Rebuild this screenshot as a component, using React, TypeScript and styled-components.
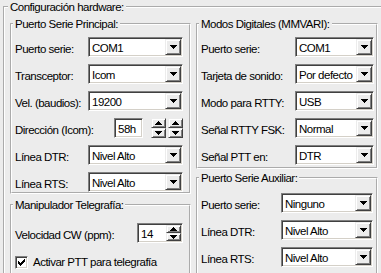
import * as React from 'react';
import styled, { createGlobalStyle } from 'styled-components';

const Face = '#ececec';

const GlobalStyle = createGlobalStyle`
    html, body {
        margin: 0;
        padding: 0;
        background: ${Face};
    }
    body {
        width: 381px;
        height: 273px;
        overflow: hidden;
        font-family: "Liberation Sans", Arial, sans-serif;
        font-size: 11.5px;
        letter-spacing: -0.5px;
        color: #000;
    }
`;

// the outer frame is cut by the window on the right and bottom
const Frame = styled.fieldset`
    box-sizing: border-box;
    margin: 0 0 0 3px;
    padding: 3px 0 0 5px;
    width: 378px;
    height: 273px;
    border: 2px groove #fff;
    border-right: none;
    border-bottom: none;
    min-width: 0;
`;

const Legend = styled.legend`
    padding: 0 2px;
    margin-left: -2px;
    line-height: 14px;
    height: 14px;
`;

const Columns = styled.div`
    display: flex;
    gap: 5px;
    height: 256px;
`;

const Column = styled.div<{ $w: number; $gap: number }>`
    width: ${p => p.$w}px;
    display: flex;
    flex-direction: column;
    gap: ${p => p.$gap}px;
`;

const Group = styled.fieldset<{ $pt: number; $pb: number; $pr: number; $open?: boolean }>`
    box-sizing: border-box;
    margin: 0;
    min-width: 0;
    padding: ${p => p.$pt}px ${p => p.$pr}px ${p => p.$pb}px 3px;
    border: 2px groove #fff;
    ${p => p.$open && 'border-bottom: none; flex: 1;'}
`;

const Rows = styled.div<{ $gap: number }>`
    display: flex;
    flex-direction: column;
    gap: ${p => p.$gap}px;
`;

const Row = styled.div`
    height: 20px;
    display: flex;
    align-items: center;
    justify-content: space-between;
`;

const Label = styled.span`
    padding-top: 3px;
    white-space: nowrap;
`;

const Sunken = styled.div<{ $w: number }>`
    box-sizing: border-box;
    width: ${p => p.$w}px;
    height: 20px;
    display: flex;
    align-items: center;
    background: #fff;
    border: 1px solid;
    border-color: #808080 #fff #fff #808080;
    box-shadow: inset 1px 1px #404040, inset -1px -1px #d4d0c8;
    padding: 1px;
`;

const Value = styled.span`
    flex: 1;
    padding: 1px 0 0 2px;
    white-space: nowrap;
    overflow: hidden;
`;

const RaisedBtn = styled.span<{ $w: number; $h: number }>`
    box-sizing: border-box;
    width: ${p => p.$w}px;
    height: ${p => p.$h}px;
    flex: none;
    display: flex;
    align-items: center;
    justify-content: center;
    background: ${Face};
    border: 1px solid;
    border-color: ${Face} #404040 #404040 ${Face};
    box-shadow: inset 1px 1px #fff, inset -1px -1px #808080;
`;

const SpinStack = styled.div`
    display: flex;
    flex-direction: column;
`;

const Controls = styled.div`
    display: flex;
    align-items: center;
`;

const SpinPair = styled.div`
    display: flex;
    gap: 2px;
    margin-left: 8px;
`;

const CheckRow = styled.label`
    height: 20px;
    display: flex;
    align-items: center;
    gap: 5px;
`;

const CheckBox = styled.span`
    box-sizing: border-box;
    width: 13px;
    height: 13px;
    background: #fff;
    border: 1px solid;
    border-color: #808080 #fff #fff #808080;
    box-shadow: inset 1px 1px #404040, inset -1px -1px #d4d0c8;
    display: flex;
    align-items: center;
    justify-content: center;
`;

const Arrow = ({ up, size = 7 }: { up?: boolean; size?: number }) => {
    const rows = Math.ceil(size / 2);
    const rects = [];
    for (let i = 0; i < rows; i++) {
        const w = size - i * 2;
        const y = up ? rows - 1 - i : i;
        rects.push(<rect key={i} x={i} y={y} width={w} height={1} />);
    }
    return (
        <svg width={size} height={rows} shapeRendering="crispEdges" fill="#000">
            {rects}
        </svg>
    );
};

const Combo = ({ value, w }: { value: string; w: number }) => (
    <Sunken $w={w}>
        <Value>{value}</Value>
        <RaisedBtn $w={16} $h={16}>
            <Arrow />
        </RaisedBtn>
    </Sunken>
);

const UpDown = ({ w, h }: { w: number; h: number }) => (
    <SpinStack>
        <RaisedBtn $w={w} $h={h}>
            <Arrow up />
        </RaisedBtn>
        <RaisedBtn $w={w} $h={h}>
            <Arrow />
        </RaisedBtn>
    </SpinStack>
);

const Check = () => (
    <CheckBox>
        <svg width="7" height="7" shapeRendering="crispEdges" fill="#000">
            <rect x="0" y="2" width="1" height="3" />
            <rect x="1" y="3" width="1" height="3" />
            <rect x="2" y="4" width="1" height="3" />
            <rect x="3" y="3" width="1" height="3" />
            <rect x="4" y="2" width="1" height="3" />
            <rect x="5" y="1" width="1" height="3" />
            <rect x="6" y="0" width="1" height="3" />
        </svg>
    </CheckBox>
);

const principal: [string, string][] = [
    ['Puerto serie:', 'COM1'],
    ['Transceptor:', 'Icom'],
    ['Vel. (baudios):', '19200'],
];

const lineas: [string, string][] = [
    ['Línea DTR:', 'Nivel Alto'],
    ['Línea RTS:', 'Nivel Alto'],
];

const digitales: [string, string][] = [
    ['Puerto serie:', 'COM1'],
    ['Tarjeta de sonido:', 'Por defecto'],
    ['Modo para RTTY:', 'USB'],
    ['Señal RTTY FSK:', 'Normal'],
    ['Señal PTT en:', 'DTR'],
];

const auxiliar: [string, string][] = [
    ['Puerto serie:', 'Ninguno'],
    ['Línea DTR:', 'Nivel Alto'],
    ['Línea RTS:', 'Nivel Alto'],
];

const App: React.FC = () => {
    return (
        <>
            <GlobalStyle />
            <Frame>
                <Legend>Configuración hardware:</Legend>
                <Columns>
                    <Column $w={181} $gap={4}>
                        <Group $pt={6} $pb={0} $pr={6}>
                            <Legend>Puerto Serie Principal:</Legend>
                            <Rows $gap={7}>
                                {principal.map(([label, value]) => (
                                    <Row key={label}>
                                        <Label>{label}</Label>
                                        <Combo value={value} w={95} />
                                    </Row>
                                ))}
                                <Row>
                                    <Label>Dirección (Icom):</Label>
                                    <Controls>
                                        <Sunken $w={29}>
                                            <Value>58h</Value>
                                        </Sunken>
                                        <SpinPair>
                                            <UpDown w={15} h={10} />
                                            <UpDown w={15} h={10} />
                                        </SpinPair>
                                    </Controls>
                                </Row>
                                {lineas.map(([label, value]) => (
                                    <Row key={label}>
                                        <Label>{label}</Label>
                                        <Combo value={value} w={95} />
                                    </Row>
                                ))}
                            </Rows>
                        </Group>
                        <Group $pt={11} $pb={0} $pr={6} $open>
                            <Legend>Manipulador Telegrafía:</Legend>
                            <Rows $gap={9}>
                                <Row>
                                    <Label>Velocidad CW (ppm):</Label>
                                    <Sunken $w={46}>
                                        <Value>14</Value>
                                        <UpDown w={15} h={8} />
                                    </Sunken>
                                </Row>
                                <CheckRow>
                                    <Check />
                                    <span>Activar PTT para telegrafía</span>
                                </CheckRow>
                            </Rows>
                        </Group>
                    </Column>
                    <Column $w={182} $gap={2}>
                        <Group $pt={6} $pb={2} $pr={2}>
                            <Legend>Modos Digitales (MMVARI):</Legend>
                            <Rows $gap={7}>
                                {digitales.map(([label, value]) => (
                                    <Row key={label}>
                                        <Label>{label}</Label>
                                        <Combo value={value} w={79} />
                                    </Row>
                                ))}
                            </Rows>
                        </Group>
                        <Group $pt={8} $pb={0} $pr={3} $open>
                            <Legend>Puerto Serie Auxiliar:</Legend>
                            <Rows $gap={7}>
                                {auxiliar.map(([label, value]) => (
                                    <Row key={label}>
                                        <Label>{label}</Label>
                                        <Combo value={value} w={92} />
                                    </Row>
                                ))}
                            </Rows>
                        </Group>
                    </Column>
                </Columns>
            </Frame>
        </>
    );
};

export default App;
